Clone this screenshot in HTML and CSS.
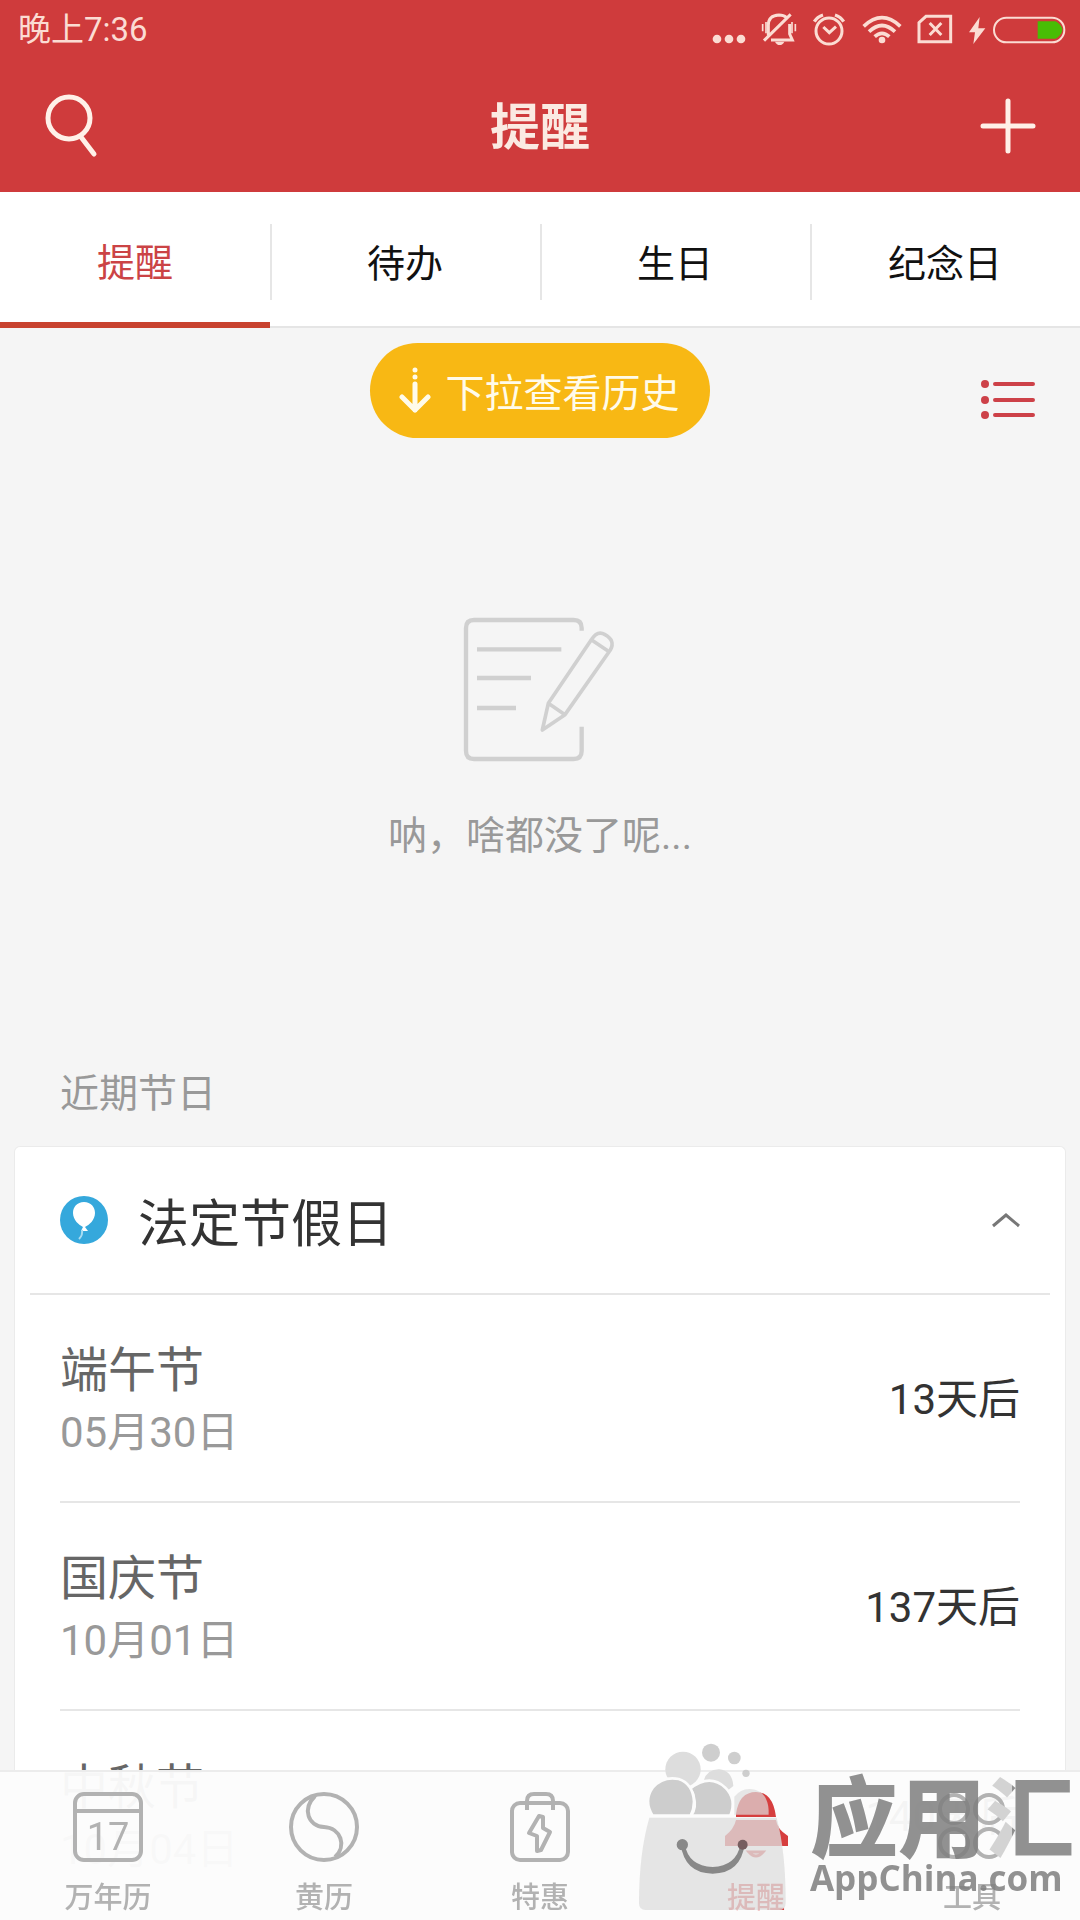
FILE: index.html
```html
<!DOCTYPE html>
<html lang="zh-CN">
<head>
<meta charset="utf-8">
<meta name="viewport" content="width=device-width, initial-scale=1">
<title>提醒</title>
<link rel="stylesheet" href="styles.css">
</head>
<body>
<header class="top">
  <div class="status">
    <time>晚上7:36</time>
    <svg class="status-icons" viewBox="30 30 1071 111" fill="none" stroke="#fbdcd3" stroke-width="9" aria-hidden="true">
      <g fill="#fbdcd3" stroke="none"><circle cx="51" cy="117" r="13"/><circle cx="87" cy="117" r="13"/><circle cx="123" cy="117" r="13"/></g>
      <path d="M205 106V76q0-30 32-31 14 0 22 7M269 72v30l8 18h-64M192 122l80-79"/>
      <path d="M188 72v22M198 66v34M276 66v34M286 72v22" stroke-width="5"/>
      <path d="M225 125h28q-5 10-14 10t-14-10z" fill="#fbdcd3" stroke="none"/>
      <circle cx="387" cy="93" r="39"/><path d="M370 81l18 17 20-18"/><path d="M343 65q9-15 26-20M405 45q17 5 26 20" stroke-width="10"/>
      <path d="M491 79q55-52 110 0M507 95q39-37 78 0M524 110q22-20 44 0" stroke-width="11"/><circle cx="546" cy="120" r="10" fill="#fbdcd3" stroke="none"/>
      <path d="M678 49h74v76h-95V68zM689 69l35 36M724 69l-35 36"/>
      <path d="M839 51l-32 46h18l-5 35 36-47h-21z" fill="#fbdcd3" stroke="none"/>
      <path d="M1013 64h54q20 12 20 26t-20 26h-54z" fill="#48bd05" stroke="none"/>
      <rect x="882" y="53" width="211" height="74" rx="37" stroke-width="6"/>
    </svg>
  </div>
  <div class="bar">
    <button class="icon-btn" aria-label="搜索"><svg width="56" height="68" viewBox="0 0 56 68" fill="none" stroke="#fff0e8" stroke-width="5" stroke-linecap="round"><circle cx="25" cy="26" r="21"/><path d="M37 45l13 17"/></svg></button>
    <h1>提醒</h1>
    <button class="icon-btn" aria-label="添加"><svg width="56" height="56" viewBox="0 0 56 56" stroke="#fff0e8" stroke-width="5" stroke-linecap="round"><path d="M28 3v50M3 28h50"/></svg></button>
  </div>
</header>
<nav class="tabs">
  <a class="tab active" href="#remind">提醒</a>
  <a class="tab" href="#todo">待办</a>
  <a class="tab" href="#birthday">生日</a>
  <a class="tab" href="#memorial">纪念日</a>
</nav>
<main>
  <div class="tools">
    <button class="history">
      <svg width="32" height="48" viewBox="0 0 32 48" fill="none" stroke="#fffbea" stroke-width="5" stroke-linecap="round" stroke-linejoin="round"><path d="M16 18v26M3 31l13 13 13-13M16 4v0M16 11v0"/></svg>
      下拉查看历史
    </button>
    <button class="icon-btn list-btn" aria-label="列表"><svg width="56" height="42" viewBox="0 0 56 42" stroke="#cd4148" stroke-width="4" stroke-linecap="round"><path d="M15 6h38M15 22h38M15 37h38"/><g fill="#cd4148" stroke="none"><circle cx="5" cy="6" r="4"/><circle cx="5" cy="22" r="4"/><circle cx="5" cy="37" r="4"/></g></svg></button>
  </div>
  <section class="empty">
    <svg width="154" height="150" viewBox="70 50 462 450" fill="none" stroke="#d0d0d0" stroke-width="13" aria-hidden="true">
      <path d="M426 94V86q0-24-24-24H103q-24 0-24 24v369q0 24 24 24h299q24 0 24-24V382"/>
      <path d="M112 150h253M112 236h162M112 326h117"/>
      <path d="M308 392l18-80 130-192q18-28 40-14 32 18 16 46L376 346zM326 312l50 34M456 122l48 32" stroke-width="11" stroke-linejoin="round"/>
    </svg>
    <p>呐，啥都没了呢...</p>
  </section>
  <h2 class="section-title">近期节日</h2>
  <section class="card">
    <button class="card-head" aria-expanded="true">
      <svg width="48" height="48" viewBox="0 0 48 48" aria-hidden="true"><circle cx="24" cy="24" r="24" fill="#35a8dc"/><path d="M24 6c-7 0-11 5-11 11 0 7 6 12 10 14l-2 4h7l-3-4c4-2 10-7 10-14 0-6-4-11-11-11z" fill="#fff"/><path d="M22 34q1 5-3 9" fill="none" stroke="#a9dcf2" stroke-width="2"/></svg>
      <span>法定节假日</span>
      <svg class="chevron" width="28" height="16" viewBox="0 0 28 16" fill="none" stroke="#777" stroke-width="3"><path d="M1 14L14 3l13 11"/></svg>
    </button>
    <ul class="days">
      <li><div><h3>端午节</h3><time>05月30日</time></div><span>13天后</span></li>
      <li><div><h3>国庆节</h3><time>10月01日</time></div><span>137天后</span></li>
      <li><div><h3>中秋节</h3><time>10月04日</time></div><span>140天后</span></li>
    </ul>
  </section>
</main>
<nav class="dock">
  <a href="#calendar"><svg width="70" height="70" viewBox="0 0 70 70" fill="none" stroke="#b2b2b2" stroke-width="4"><rect x="2" y="2" width="66" height="66" rx="9"/><path d="M3 19h64"/><text x="35" y="58" class="day-number">17</text></svg>万年历</a>
  <a href="#almanac"><svg width="70" height="70" viewBox="0 0 70 70" fill="none" stroke="#b2b2b2" stroke-width="4"><circle cx="35" cy="35" r="33"/><path d="M26 4C13 17 19 34 35 35c17 1 23 19 11 30"/></svg>黄历</a>
  <a href="#deals"><svg width="70" height="70" viewBox="0 0 70 70" fill="none" stroke="#b2b2b2" stroke-width="4" stroke-linejoin="round"><rect x="7" y="11" width="56" height="57" rx="8"/><path d="M22 18v-9q0-7 7-7h12q7 0 7 7v9M34 24L24 41l8 3v15l4-1 9-18-7-4V25z"/></svg>特惠</a>
  <a href="#remind" class="current"><svg width="70" height="70" viewBox="0 0 70 70" fill="#d63e3e"><path d="M15 22Q18 0 35 0t20 25H15zM15 28h40q1 9 12 16v10H4V44q9-7 11-16z"/><path d="M28 60h14q-7 8-14 0z" fill="none" stroke="#d63e3e" stroke-width="3"/></svg>提醒</a>
  <a href="#tools"><svg width="70" height="70" viewBox="0 0 70 70" fill="none" stroke="#b2b2b2" stroke-width="4"><circle cx="17" cy="17" r="14"/><circle cx="52" cy="17" r="14"/><circle cx="17" cy="51" r="14"/><circle cx="52" cy="51" r="14"/></svg>工具</a>
</nav>
<aside class="badge">
  <svg width="160" height="170" viewBox="510 60 480 510" aria-hidden="true">
    <g fill="#ddd"><circle cx="669" cy="148" r="53"/><path d="M731 182q10-34 46-34 40 4 43 50l-15 12-45-28z"/></g>
    <g fill="#c9c9c9" fill-opacity=".9"><circle cx="753" cy="98" r="27"/><circle cx="823" cy="114" r="19"/><circle cx="858" cy="160" r="11"/></g>
    <g fill="#cdcdcd" stroke="#fcfcfc" stroke-width="8"><path d="M693 287q18-22 8-58-2-15-12-22 60-48 107-4 35 35 15 84z"/><path d="M578 287q-28-44 0-84 30-35 78-26 43 14 46 68 0 22-10 42z"/></g>
    <path d="M823 230q25-32 65-20 40 14 38 74H823z" fill="#ddd" fill-opacity=".7"/>
    <path d="M568 293H950q27 100 27 255 0 22-20 22H557q-20 0-20-20 0-150 31-257z" fill="#dedede" fill-opacity=".78"/>
    <path d="M662 373q12 88 96 88t96-88h-12q-14 66-84 68-72-2-84-68z" fill="#888"/><circle cx="667" cy="374" r="17" fill="#888"/><circle cx="848" cy="374" r="15" fill="#765e60"/>
  </svg>
  <p><strong>应用<span>汇</span></strong><b>AppChina.com</b></p>
</aside>
</body>
</html>
```
FILE: styles.css
```css
* { box-sizing: border-box; }
body {
  margin: 0;
  min-height: 100vh;
  background: #f5f5f5;
  color: #333;
  font-family: Roboto, "Noto Sans CJK SC", sans-serif;
}
h1, h2, h3, p, ul { margin: 0; padding: 0; font-weight: 400; }
button { border: 0; padding: 0; background: none; font: inherit; color: inherit; }
a { color: inherit; text-decoration: none; }
svg { display: block; flex: none; }

.top { background: #cf3b3c; color: #fbdcd3; }
.status {
  display: flex;
  justify-content: space-between;
  height: 60px;
  padding: 10px 13px 0 18px;
  font-size: 33px;
  line-height: 40px;
}
.status-icons { width: 357px; height: 37px; }
.bar {
  display: flex;
  align-items: center;
  justify-content: space-between;
  height: 132px;
  padding: 0 44px;
}
.bar h1 { padding-bottom: 6px; font-size: 50px; font-weight: 700; color: #fbeae2; }

.tabs {
  display: grid;
  grid-template-columns: repeat(4, 1fr);
  height: 136px;
  background: #fff;
  border-bottom: 2px solid #e5e5e5;
  color: #111;
  font-size: 38px;
}
.tab {
  display: flex;
  align-items: center;
  justify-content: center;
}
.tab + .tab { background: linear-gradient(#e6e6e6, #e6e6e6) left 32px / 2px 76px no-repeat; }
.tab.active { height: 136px; padding-top: 4px; border-bottom: 6px solid #c8422f; color: #cb4345; }

.tools {
  display: grid;
  grid-template-columns: 1fr auto 1fr;
  padding: 15px 44px 0;
}
.history {
  grid-column: 2;
  display: flex;
  align-items: center;
  gap: 14px;
  height: 95px;
  padding: 0 30px 2px 29px;
  border-radius: 48px;
  background: #f8b814;
  color: #fffbea;
  font-size: 39px;
}
.list-btn { justify-self: end; align-self: center; padding-top: 16px; }

.empty {
  display: flex;
  flex-direction: column;
  align-items: center;
  gap: 42px;
  padding-top: 178px;
  color: #999;
  font-size: 39px;
  line-height: 56px;
}
.section-title {
  padding: 202px 60px 24px;
  color: #999;
  font-size: 39px;
  line-height: 56px;
}
.card {
  margin: 0 14px;
  background: #fff;
  border: 1px solid #ebebeb;
  border-bottom: 0;
  border-radius: 6px 6px 0 0;
}
.card-head {
  display: flex;
  align-items: center;
  gap: 30px;
  width: calc(100% - 30px);
  height: 148px;
  margin: 0 15px;
  padding: 0 30px;
  border-bottom: 2px solid #e6e6e6;
  font-size: 51px;
}
.chevron { margin-left: auto; }
.days { list-style: none; padding: 0 45px; }
.days li {
  display: flex;
  align-items: center;
  justify-content: space-between;
  height: 208px;
  border-bottom: 2px solid #e6e6e6;
  font-size: 42px;
}
.days li:last-child { border: 0; }
.days div { padding-top: 6px; }
.days span { padding-bottom: 6px; }
.days h3 { font-size: 48px; line-height: 64px; color: #666; }
.days time { display: block; line-height: 60px; color: #999; }

.dock {
  position: fixed;
  inset: auto 0 0;
  display: grid;
  grid-template-columns: repeat(5, 1fr);
  height: 150px;
  border-top: 2px solid #ececec;
  background: rgba(252, 252, 252, 0.96);
  color: #b2b2b2;
  font-size: 29px;
  font-weight: 500;
  line-height: 40px;
}
.dock a {
  display: flex;
  flex-direction: column;
  align-items: center;
  gap: 16px;
  padding-top: 20px;
}
.dock .current { color: #d63e3e; }
.day-number { fill: #b2b2b2; stroke: none; font-size: 38px; font-weight: 400; text-anchor: middle; }

.badge {
  position: fixed;
  right: 6px;
  bottom: 10px;
  display: flex;
  align-items: flex-end;
  gap: 20px;
  color: rgba(126, 126, 126, 0.85);
  pointer-events: none;
}
.badge p { display: flex; flex-direction: column; padding-bottom: 8px; }
.badge strong { font-size: 88px; font-weight: 900; line-height: 68px; }
.badge span {
  padding: 16px 0;
  background: linear-gradient(90deg, #d3d3d3 30%, #919191 30%);
  background-clip: text;
  color: transparent;
}
.badge b { font: 700 35px/48px "Open Sans", sans-serif; }
```
